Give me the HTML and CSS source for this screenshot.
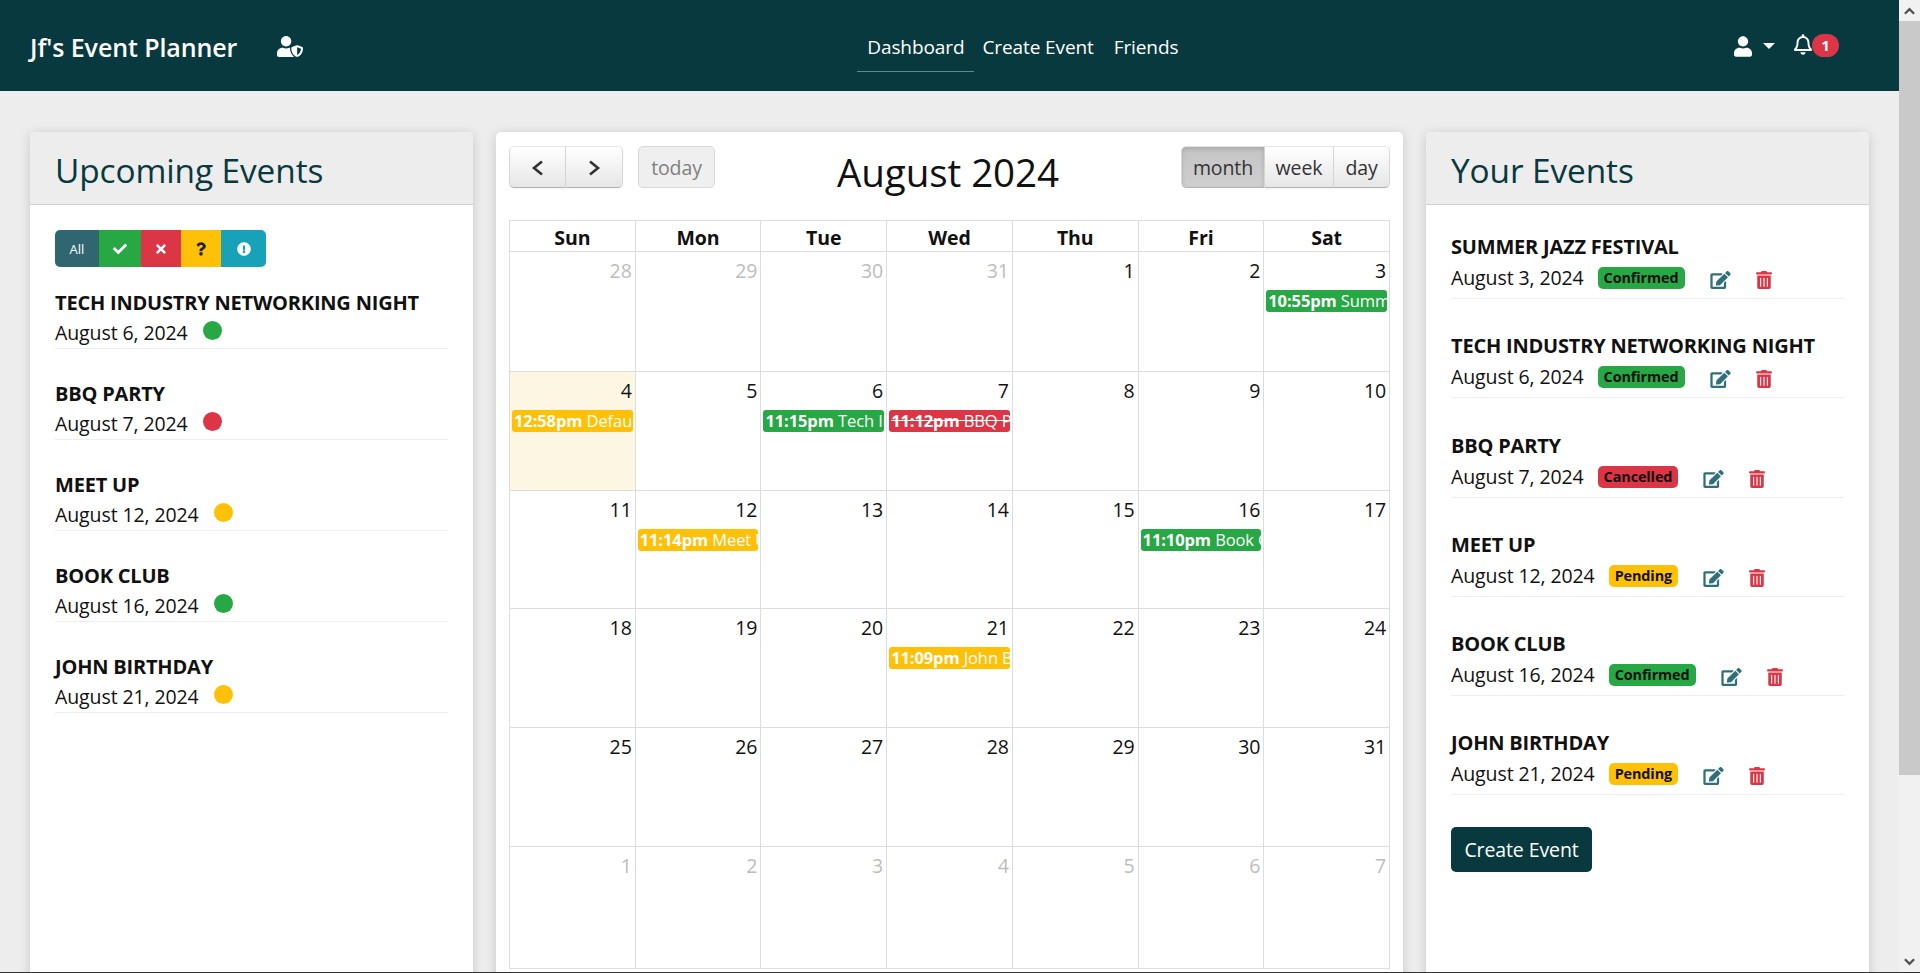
FILE: index.html
```html
<!DOCTYPE html>
<html lang="en">
<head>
  <meta charset="UTF-8">
  <meta name="viewport" content="width=device-width, initial-scale=1">
  <title>Jf's Event Planner</title>
  <link rel="stylesheet" href="styles.css">
</head>
<body>

  <!-- icon set -->
  <svg class="defs" width="0" height="0" aria-hidden="true">
    <symbol id="i-check" viewBox="0 0 512 512"><path d="M173.898 439.404l-166.4-166.4c-9.997-9.997-9.997-26.206 0-36.204l36.203-36.204c9.997-9.998 26.207-9.998 36.204 0L192 312.69 432.095 72.596c9.997-9.997 26.207-9.997 36.204 0l36.203 36.204c9.997 9.997 9.997 26.206 0 36.204l-294.4 294.401c-9.998 9.997-26.207 9.997-36.204-.001z"/></symbol>
    <symbol id="i-times" viewBox="0 0 352 512"><path d="M242.72 256l100.07-100.07c12.28-12.28 12.28-32.19 0-44.48l-22.24-22.24c-12.28-12.28-32.19-12.28-44.48 0L176 189.28 75.93 89.21c-12.28-12.28-32.19-12.28-44.48 0L9.21 111.45c-12.28 12.28-12.28 32.19 0 44.48L109.28 256 9.21 356.07c-12.28 12.28-12.28 32.19 0 44.48l22.24 22.24c12.28 12.28 32.2 12.28 44.48 0L176 322.72l100.07 100.07c12.28 12.28 32.2 12.28 44.48 0l22.24-22.24c12.28-12.28 12.28-32.19 0-44.48L242.72 256z"/></symbol>
    <symbol id="i-question" viewBox="0 0 384 512"><path d="M202.021 0C122.202 0 70.503 32.703 29.914 91.026c-7.363 10.58-5.093 25.086 5.178 32.874l43.138 32.709c10.373 7.865 25.132 6.026 33.253-4.148 25.049-31.381 43.63-49.449 82.757-49.449 30.764 0 68.816 19.799 68.816 49.631 0 22.552-18.617 34.134-48.993 51.164-35.423 19.86-82.299 44.576-82.299 106.405V320c0 13.255 10.745 24 24 24h72.471c13.255 0 24-10.745 24-24v-5.773c0-42.86 125.268-44.645 125.268-160.627C377.504 66.256 286.902 0 202.021 0zM192 373.459c-38.196 0-69.271 31.075-69.271 69.271 0 38.195 31.075 69.27 69.271 69.27s69.271-31.075 69.271-69.271-31.075-69.27-69.271-69.27z"/></symbol>
    <symbol id="i-alert" viewBox="0 0 512 512"><path d="M504 256c0 136.997-111.043 248-248 248S8 392.997 8 256C8 119.083 119.043 8 256 8s248 111.083 248 248zm-248 50c-25.405 0-46 20.595-46 46s20.595 46 46 46 46-20.595 46-46-20.595-46-46-46zm-43.673-165.346l7.418 136c.347 6.364 5.609 11.346 11.982 11.346h48.546c6.373 0 11.635-4.982 11.982-11.346l7.418-136c.375-6.874-5.098-12.654-11.982-12.654h-63.383c-6.884 0-12.356 5.78-11.981 12.654z"/></symbol>
    <symbol id="i-user" viewBox="0 0 448 512"><path d="M224 256c70.7 0 128-57.3 128-128S294.7 0 224 0 96 57.3 96 128s57.3 128 128 128zm89.6 32h-16.7c-22.2 10.2-46.9 16-72.9 16s-50.6-5.8-72.9-16h-16.7C60.2 288 0 348.2 0 422.4V464c0 26.5 21.5 48 48 48h352c26.5 0 48-21.5 48-48v-41.6c0-74.2-60.2-134.4-134.4-134.4z"/></symbol>
    <symbol id="i-user-shield" viewBox="0 0 640 512"><path d="M622.3 271.1l-115.2-45c-4.1-1.6-12.6-3.7-22.2 0l-115.2 45c-10.7 4.2-17.7 14-17.7 24.9 0 111.6 68.7 188.8 132.9 213.9 9.6 3.7 18 1.6 22.2 0C558.4 489.9 640 420.5 640 296c0-10.9-7-20.7-17.7-24.9zM496 462.4V273.3l95.5 37.3c-5.6 87.1-60.9 135.4-95.5 151.8zM224 256c70.7 0 128-57.3 128-128S294.7 0 224 0 96 57.3 96 128s57.3 128 128 128zm96 40c0-2.5.8-4.7 1.1-7.2-2.5-.1-4.9-.8-7.5-.8h-16.7c-22.2 10.2-46.9 16-72.9 16s-50.6-5.8-72.9-16h-16.7C60.2 288 0 348.2 0 422.4V464c0 26.5 21.5 48 48 48h352c6.8 0 13.3-1.5 19.2-4-54-42.9-99.2-116.7-99.2-212z"/></symbol>
    <symbol id="i-bell" viewBox="0 0 448 512"><path d="M439.39 362.29c-19.32-20.76-55.47-51.99-55.47-154.29 0-77.7-54.48-139.9-127.94-155.16V32c0-17.67-14.32-32-31.98-32s-31.98 14.33-31.98 32v20.84C118.56 68.1 64.08 130.3 64.08 208c0 102.3-36.15 133.53-55.47 154.29-6 6.45-8.66 14.16-8.61 21.71.11 16.4 12.98 32 32.1 32h383.8c19.12 0 32-15.6 32.1-32 .05-7.55-2.61-15.27-8.61-21.71zM67.53 368c21.22-27.97 44.42-74.33 44.53-159.42 0-.2-.06-.38-.06-.58 0-61.86 50.14-112 112-112s112 50.14 112 112c0 .2-.06.38-.06.58.11 85.1 23.31 131.46 44.53 159.42H67.53zM224 512c35.32 0 63.97-28.65 63.97-64H160.03c0 35.35 28.65 64 63.97 64z"/></symbol>
    <symbol id="i-edit" viewBox="0 0 576 512"><path d="M402.6 83.2l90.2 90.2c3.8 3.8 3.8 10 0 13.8L274.4 405.6l-92.8 10.3c-12.4 1.4-22.9-9.1-21.5-21.5l10.3-92.8L388.8 83.2c3.8-3.8 10-3.8 13.8 0zm162-22.9l-48.8-48.8c-15.2-15.2-39.9-15.2-55.2 0l-35.4 35.4c-3.8 3.8-3.8 10 0 13.8l90.2 90.2c3.8 3.8 10 3.8 13.8 0l35.4-35.4c15.2-15.3 15.2-40 0-55.2zM384 346.2V448H64V128h229.8c3.2 0 6.2-1.3 8.5-3.5l40-40c7.6-7.6 2.2-20.5-8.5-20.5H48C21.5 64 0 85.5 0 112v352c0 26.5 21.5 48 48 48h352c26.5 0 48-21.5 48-48V306.2c0-10.7-12.9-16-20.5-8.5l-40 40c-2.2 2.3-3.5 5.3-3.5 8.5z"/></symbol>
    <symbol id="i-trash" viewBox="0 0 448 512"><path d="M32 464a48 48 0 0 0 48 48h288a48 48 0 0 0 48-48V128H32zm272-256a16 16 0 0 1 32 0v224a16 16 0 0 1-32 0zm-96 0a16 16 0 0 1 32 0v224a16 16 0 0 1-32 0zm-96 0a16 16 0 0 1 32 0v224a16 16 0 0 1-32 0zM432 32H312l-9.4-18.7A24 24 0 0 0 281.1 0H166.8a23.72 23.72 0 0 0-21.4 13.3L136 32H16A16 16 0 0 0 0 48v32a16 16 0 0 0 16 16h416a16 16 0 0 0 16-16V48a16 16 0 0 0-16-16z"/></symbol>
  </svg>

  <div class="page">
    <nav class="navbar">
      <a class="brand">Jf's Event Planner</a>
      <svg class="brand-icon"><use href="#i-user-shield"/></svg>
      <div class="nav-links">
        <a class="nav-link active">Dashboard</a>
        <a class="nav-link">Create Event</a>
        <a class="nav-link">Friends</a>
      </div>
      <div class="nav-right">
        <svg class="user-icon"><use href="#i-user"/></svg>
        <span class="caret"></span>
        <svg class="bell-icon"><use href="#i-bell"/></svg>
        <span class="bell-badge">1</span>
      </div>
    </nav>

    <main class="columns">

      <section class="card">
        <h2 class="card-header">Upcoming Events</h2>
        <div class="card-body">
          <div class="filters">
            <button class="filter filter-all">All</button>
            <button class="filter filter-green"><svg class="i-check"><use href="#i-check"/></svg></button>
            <button class="filter filter-red"><svg class="i-times"><use href="#i-times"/></svg></button>
            <button class="filter filter-yellow"><svg class="i-question"><use href="#i-question"/></svg></button>
            <button class="filter filter-cyan"><svg class="i-alert"><use href="#i-alert"/></svg></button>
          </div>

          <div class="upcoming">
            <h3 class="event-name">Tech Industry Networking Night</h3>
            <div class="event-line">August 6, 2024 <span class="dot green"></span></div>
          </div>
          <div class="upcoming">
            <h3 class="event-name">BBQ Party</h3>
            <div class="event-line">August 7, 2024 <span class="dot red"></span></div>
          </div>
          <div class="upcoming">
            <h3 class="event-name">Meet Up</h3>
            <div class="event-line">August 12, 2024 <span class="dot yellow"></span></div>
          </div>
          <div class="upcoming">
            <h3 class="event-name">Book Club</h3>
            <div class="event-line">August 16, 2024 <span class="dot green"></span></div>
          </div>
          <div class="upcoming">
            <h3 class="event-name">John Birthday</h3>
            <div class="event-line">August 21, 2024 <span class="dot yellow"></span></div>
          </div>
        </div>
      </section>

      <section class="card calendar">
        <div class="cal-toolbar">
          <div class="btn-group">
            <button class="cal-btn arrow"><svg viewBox="0 0 14 18"><polyline points="11,2.5 3,9 11,15.5"/></svg></button>
            <button class="cal-btn arrow"><svg viewBox="0 0 14 18"><polyline points="3,2.5 11,9 3,15.5"/></svg></button>
          </div>
          <button class="cal-btn today-btn">today</button>
          <h2 class="cal-title">August 2024</h2>
          <div class="btn-group">
            <button class="cal-btn month-btn pressed">month</button>
            <button class="cal-btn week-btn">week</button>
            <button class="cal-btn day-btn">day</button>
          </div>
        </div>

        <div class="cal-grid">
          <div class="cal-head">Sun</div>
          <div class="cal-head">Mon</div>
          <div class="cal-head">Tue</div>
          <div class="cal-head">Wed</div>
          <div class="cal-head">Thu</div>
          <div class="cal-head">Fri</div>
          <div class="cal-head">Sat</div>

          <div class="day other"><span class="num">28</span></div>
          <div class="day other"><span class="num">29</span></div>
          <div class="day other"><span class="num">30</span></div>
          <div class="day other"><span class="num">31</span></div>
          <div class="day"><span class="num">1</span></div>
          <div class="day"><span class="num">2</span></div>
          <div class="day"><span class="num">3</span>
            <div class="event green"><b>10:55pm</b> Summer Jazz Festival</div></div>

          <div class="day today"><span class="num">4</span>
            <div class="event yellow"><b>12:58pm</b> Default Event</div></div>
          <div class="day"><span class="num">5</span></div>
          <div class="day"><span class="num">6</span>
            <div class="event green"><b>11:15pm</b> Tech Industry Networking Night</div></div>
          <div class="day"><span class="num">7</span>
            <div class="event red"><b>11:12pm</b> BBQ Party</div></div>
          <div class="day"><span class="num">8</span></div>
          <div class="day"><span class="num">9</span></div>
          <div class="day"><span class="num">10</span></div>

          <div class="day"><span class="num">11</span></div>
          <div class="day"><span class="num">12</span>
            <div class="event yellow"><b>11:14pm</b> Meet Up</div></div>
          <div class="day"><span class="num">13</span></div>
          <div class="day"><span class="num">14</span></div>
          <div class="day"><span class="num">15</span></div>
          <div class="day"><span class="num">16</span>
            <div class="event green"><b>11:10pm</b> Book Club</div></div>
          <div class="day"><span class="num">17</span></div>

          <div class="day"><span class="num">18</span></div>
          <div class="day"><span class="num">19</span></div>
          <div class="day"><span class="num">20</span></div>
          <div class="day"><span class="num">21</span>
            <div class="event yellow"><b>11:09pm</b> John Birthday</div></div>
          <div class="day"><span class="num">22</span></div>
          <div class="day"><span class="num">23</span></div>
          <div class="day"><span class="num">24</span></div>

          <div class="day"><span class="num">25</span></div>
          <div class="day"><span class="num">26</span></div>
          <div class="day"><span class="num">27</span></div>
          <div class="day"><span class="num">28</span></div>
          <div class="day"><span class="num">29</span></div>
          <div class="day"><span class="num">30</span></div>
          <div class="day"><span class="num">31</span></div>

          <div class="day other"><span class="num">1</span></div>
          <div class="day other"><span class="num">2</span></div>
          <div class="day other"><span class="num">3</span></div>
          <div class="day other"><span class="num">4</span></div>
          <div class="day other"><span class="num">5</span></div>
          <div class="day other"><span class="num">6</span></div>
          <div class="day other"><span class="num">7</span></div>
        </div>
      </section>

      <section class="card">
        <h2 class="card-header">Your Events</h2>
        <div class="card-body yours">
          <div class="own">
            <h3 class="event-name">Summer Jazz Festival</h3>
            <div class="own-line">August 3, 2024 <span class="badge green">Confirmed</span>
              <svg class="edit"><use href="#i-edit"/></svg><svg class="trash"><use href="#i-trash"/></svg></div>
          </div>
          <div class="own">
            <h3 class="event-name">Tech Industry Networking Night</h3>
            <div class="own-line">August 6, 2024 <span class="badge green">Confirmed</span>
              <svg class="edit"><use href="#i-edit"/></svg><svg class="trash"><use href="#i-trash"/></svg></div>
          </div>
          <div class="own">
            <h3 class="event-name">BBQ Party</h3>
            <div class="own-line">August 7, 2024 <span class="badge red">Cancelled</span>
              <svg class="edit"><use href="#i-edit"/></svg><svg class="trash"><use href="#i-trash"/></svg></div>
          </div>
          <div class="own">
            <h3 class="event-name">Meet Up</h3>
            <div class="own-line">August 12, 2024 <span class="badge yellow">Pending</span>
              <svg class="edit"><use href="#i-edit"/></svg><svg class="trash"><use href="#i-trash"/></svg></div>
          </div>
          <div class="own">
            <h3 class="event-name">Book Club</h3>
            <div class="own-line">August 16, 2024 <span class="badge green">Confirmed</span>
              <svg class="edit"><use href="#i-edit"/></svg><svg class="trash"><use href="#i-trash"/></svg></div>
          </div>
          <div class="own">
            <h3 class="event-name">John Birthday</h3>
            <div class="own-line">August 21, 2024 <span class="badge yellow">Pending</span>
              <svg class="edit"><use href="#i-edit"/></svg><svg class="trash"><use href="#i-trash"/></svg></div>
          </div>
          <button class="create-btn">Create Event</button>
        </div>
      </section>

    </main>
  </div>

  <!-- drawn scrollbar -->
  <div class="scrollbar">
    <div class="sb-arrow"><svg viewBox="0 0 12 8"><polyline points="1,7 6,2 11,7"/></svg></div>
    <div class="sb-track"><div class="sb-thumb"></div></div>
    <div class="sb-arrow"><svg viewBox="0 0 12 8"><polyline points="1,1 6,6 11,1"/></svg></div>
  </div>

</body>
</html>
```

FILE: styles.css
```css
* {
  box-sizing: border-box;
}
html, body {
  height: 100%;
}
body {
  margin: 0;
  display: flex;
  overflow: hidden;
  background-color: #eeeded;
  border-bottom: 1px solid #333;
  color: #111;
  font-family: "Open Sans", "Noto Sans", sans-serif;
  font-size: 19.5px;
  letter-spacing: -0.1px;
  line-height: 30px;
}
.defs {
  position: absolute;
}
svg {
  fill: currentColor;
  display: block;
}
.page {
  flex: 1;
  min-width: 0;
}

/* navbar */
.navbar {
  height: 91px;
  display: flex;
  align-items: center;
  padding: 0 60px 0 30px;
  background-color: #07393e;
  color: #fff;
}
.brand {
  margin-top: 2px;
  font-size: 25px;
  font-weight: 600;
}
.brand-icon {
  width: 26px;
  height: 21px;
  margin: 2px 0 0 40px;
}
.nav-links {
  display: flex;
  margin-left: 554px;
}
.nav-link {
  padding: 13px 10px 9px;
  border-bottom: 1px solid transparent;
  font-size: 19px;
}
.nav-link.active {
  margin-right: -2px;
  border-bottom-color: #5c8a8e;
}
.nav-right {
  display: flex;
  align-items: center;
  margin-left: auto;
}
.user-icon {
  width: 18px;
  height: 21px;
  margin-top: 2px;
}
.caret {
  width: 0;
  height: 0;
  margin: 0 19px 0 11px;
  border-left: 6px solid transparent;
  border-right: 6px solid transparent;
  border-top: 6px solid #fff;
}
.bell-icon {
  width: 18px;
  height: 21px;
  margin-top: -2px;
}
.bell-badge {
  width: 27px;
  height: 23px;
  border-radius: 12px;
  background-color: #dc3545;
  font-size: 15px;
  font-weight: 700;
  line-height: 23px;
  text-align: center;
}

/* columns */
.columns {
  display: grid;
  grid-template-columns: 443px 1fr 443px;
  gap: 23px;
  padding: 41px 30px 0;
}
.card {
  background-color: #fff;
  border-radius: 5px;
  box-shadow: 0 2px 12px rgba(0, 0, 0, 0.16);
}
.card-header {
  margin: 0;
  height: 73px;
  padding: 0 25px;
  background-color: #eeeded;
  border-bottom: 1px solid #d0d0d0;
  border-radius: 5px 5px 0 0;
  color: #07393e;
  font-size: 33.4px;
  font-weight: 400;
  line-height: 76px;
}
.card-body {
  padding: 25px;
}
.card-body.yours {
  padding-top: 27px;
}

/* status filter */
.filters {
  display: flex;
  height: 37px;
  width: 211px;
  margin-bottom: 21px;
  border-radius: 5px;
  overflow: hidden;
}
.filter {
  display: flex;
  align-items: center;
  justify-content: center;
  border: none;
  padding: 0;
  color: #fff;
}
.filter-all {
  width: 44px;
  background-color: #2f6670;
  font-family: inherit;
  font-size: 13px;
}
.filter-green {
  width: 42px;
  background-color: #28a745;
}
.filter-red {
  width: 40px;
  background-color: #dc3545;
}
.filter-yellow {
  width: 40px;
  background-color: #ffc107;
  color: #212529;
}
.filter-cyan {
  width: 45px;
  background-color: #17a2b8;
}
.i-check {
  width: 14px;
  height: 14px;
}
.i-times {
  width: 10px;
  height: 14px;
}
.i-question {
  width: 10px;
  height: 14px;
}
.i-alert {
  width: 14px;
  height: 14px;
}

/* event lists */
.event-name {
  margin: 0;
  font-size: 20px;
  font-weight: 700;
  letter-spacing: -0.2px;
  line-height: 30px;
  text-transform: uppercase;
}
.upcoming {
  height: 61px;
  margin-bottom: 30px;
  border-bottom: 1px solid #eee;
}
.event-line {
  display: flex;
}
.dot {
  width: 19px;
  height: 19px;
  margin: 3px 0 0 15px;
  border-radius: 50%;
}
.dot.green, .badge.green, .event.green {
  background-color: #28a745;
}
.dot.red, .badge.red, .event.red {
  background-color: #dc3545;
}
.dot.yellow, .badge.yellow, .event.yellow {
  background-color: #ffc107;
}
.own {
  height: 67px;
  margin-bottom: 32.25px;
  border-bottom: 1px solid #eee;
}
.own-line {
  display: flex;
  align-items: flex-start;
  padding-top: 1px;
}
.badge {
  margin: 4px 0 0 14px;
  padding: 0 6px;
  height: 22px;
  border-radius: 5px;
  color: #111;
  font-size: 14.4px;
  font-weight: 700;
  line-height: 22px;
}
.edit {
  width: 21px;
  height: 18px;
  margin: 8px 0 0 25px;
  color: #2f6f7a;
}
.trash {
  width: 16px;
  height: 18px;
  margin: 8px 0 0 25px;
  color: #dc3545;
}
.create-btn {
  display: block;
  width: 141px;
  height: 45px;
  margin-top: -1px;
  padding: 0;
  border: none;
  border-radius: 5px;
  background-color: #07393e;
  color: #fff;
  font-family: inherit;
  font-size: 19.5px;
  letter-spacing: -0.1px;
}

/* calendar */
.calendar {
  padding: 14px 13px 20px;
}
.cal-toolbar {
  display: flex;
  align-items: flex-start;
  height: 42px;
  margin-bottom: 32px;
}
.btn-group {
  display: flex;
}
.cal-btn {
  height: 42px;
  padding: 0;
  border: 1px solid #ccc;
  border-color: #e6e6e6 #d8d8d8 #b3b3b3;
  border-left-width: 0;
  background: linear-gradient(#fff, #e6e6e6);
  box-shadow: inset 0 1px 0 rgba(255, 255, 255, 0.2), 0 1px 2px rgba(0, 0, 0, 0.05);
  color: #333;
  font-family: inherit;
  font-size: 19.5px;
  letter-spacing: -0.1px;
}
.btn-group .cal-btn:first-child {
  border-left-width: 1px;
  border-radius: 5px 0 0 5px;
}
.btn-group .cal-btn:last-child {
  border-radius: 0 5px 5px 0;
}
.cal-btn.arrow {
  width: 57px;
}
.cal-btn.arrow svg {
  width: 14px;
  height: 18px;
  margin: 2px auto 0;
  fill: none;
  stroke: #333;
  stroke-width: 2.6;
}
.today-btn {
  width: 77px;
  margin-left: 15px;
  border: 1px solid #d8d8d8;
  border-radius: 5px;
  background: #efefef;
  box-shadow: none;
  color: #808080;
}
.cal-title {
  flex: 1;
  margin: 0;
  font-size: 38.6px;
  font-weight: 400;
  line-height: 52px;
  text-align: center;
}
.month-btn {
  width: 84px;
}
.week-btn {
  width: 69px;
}
.day-btn {
  width: 56px;
}
.cal-btn.pressed {
  background: linear-gradient(#c4c4c4, #cfcfcf);
  box-shadow: inset 0 2px 4px rgba(0, 0, 0, 0.15);
}
.cal-grid {
  display: grid;
  grid-template-columns: repeat(7, 1fr);
  grid-template-rows: 31px 120px 119px 118px 119px 119px 122px;
  border-top: 1px solid #ddd;
  border-left: 1px solid #ddd;
}
.cal-head {
  border-right: 1px solid #ddd;
  border-bottom: 1px solid #ddd;
  font-weight: 700;
  line-height: 34px;
  text-align: center;
}
.day {
  border-right: 1px solid #ddd;
  border-bottom: 1px solid #ddd;
  min-width: 0;
}
.day.today {
  background-color: #fdf6e3;
}
.num {
  display: block;
  height: 38px;
  padding: 4px 3px 0 0;
  text-align: right;
}
.day.other .num {
  color: #bdbdbd;
}
.event {
  height: 22px;
  margin: 0 2px;
  padding-left: 2px;
  border-radius: 3px;
  overflow: hidden;
  color: #fff;
  font-size: 16.5px;
  line-height: 22px;
  white-space: nowrap;
}
.event.red {
  text-decoration: line-through;
}

/* scrollbar */
.scrollbar {
  display: flex;
  flex-direction: column;
  width: 21px;
  background-color: #f1f1f1;
}
.sb-arrow {
  display: flex;
  align-items: center;
  justify-content: center;
  height: 21px;
}
.sb-arrow svg {
  width: 11px;
  height: 8px;
  fill: none;
  stroke: #505050;
  stroke-width: 2.4;
}
.sb-track {
  flex: 1;
}
.sb-thumb {
  height: 754px;
  background-color: #c9c9c9;
}
```
